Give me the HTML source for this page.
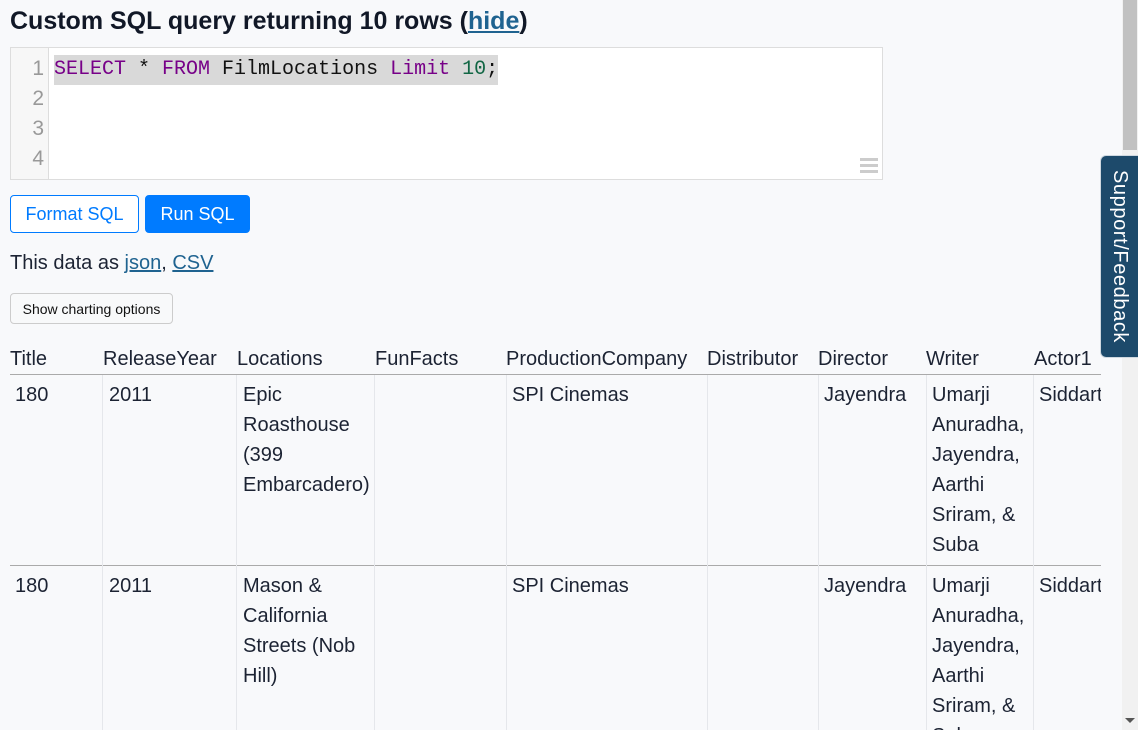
<!DOCTYPE html>
<html><head><meta charset="utf-8"><style>
*{box-sizing:border-box;margin:0;padding:0}
html,body{width:1138px;height:730px;overflow:hidden}
body{background:#f8f9fb;font-family:"Liberation Sans",Arial,sans-serif;color:#1c2333;position:relative}
.a{position:absolute}
h1{position:absolute;left:10px;top:7px;font-size:25px;font-weight:bold;color:#111827;white-space:nowrap}
a{color:#1f6390;text-decoration:underline}
.ed{left:10px;top:47px;width:873px;height:133px;background:#fff;border:1px solid #ddd;overflow:hidden}
.gut{left:0;top:0;width:38px;height:131px;background:#f7f7f7;border-right:1px solid #ddd}
.ln{position:absolute;right:4px;font:21px "Liberation Sans",sans-serif;color:#999;line-height:30px}
.code{left:43px;top:6px;height:30px;line-height:30px;font:20px/30px "Liberation Mono",monospace;background:#d9d9d9;white-space:pre;color:#111}
.k{color:#770088}.n{color:#116644}
.btn{top:195px;height:38px;border-radius:4px;font-size:18px;line-height:36px;text-align:center;border:1px solid #007bff}
.cell{position:absolute;font-size:20px;line-height:30px;padding-left:5px;white-space:nowrap}
.vl{position:absolute;width:1px;background:#e5e7eb}
</style></head><body>
<h1>Custom SQL query returning 10 rows (<a>hide</a>)</h1>
<div class="a ed">
 <div class="a gut">
  <div class="ln" style="top:6px">1</div><div class="ln" style="top:36px">2</div><div class="ln" style="top:66px">3</div><div class="ln" style="top:96px">4</div>
 </div>
 <div class="a code" style="top:7px"><span class="k">SELECT</span> * <span class="k">FROM</span> FilmLocations <span class="k">Limit</span> <span class="n">10</span>;</div>
 <div class="a" style="right:4px;bottom:6px;width:18px">
  <div style="height:3px;background:#ccc;margin-bottom:3px"></div><div style="height:3px;background:#ccc;margin-bottom:3px"></div><div style="height:3px;background:#ccc"></div>
 </div>
</div>
<div class="a btn" style="left:10px;width:129px;background:#fff;color:#007bff">Format SQL</div>
<div class="a btn" style="left:145px;width:105px;background:#007bff;color:#fff">Run SQL</div>
<div class="a" style="left:10px;top:250px;font-size:20px;line-height:26px">This data as <a>json</a>, <a>CSV</a></div>
<div class="a" style="left:10px;top:293px;width:163px;height:31px;border:1px solid #ccc;border-radius:4px;background:#f8f9fa;font-size:14px;line-height:30px;text-align:center;color:#111">Show charting options</div>

<div class="a" style="left:10px;top:340px;width:1091px;height:390px;overflow:hidden">
 <div class="a" style="left:0;top:34px;width:1100px;height:1px;background:#aaa"></div>
 <div class="a" style="left:0;top:225px;width:1100px;height:1px;background:#aaa"></div>
 <div class="vl" style="left:92px;top:35px;height:400px"></div>
 <div class="vl" style="left:226px;top:35px;height:400px"></div>
 <div class="vl" style="left:364px;top:35px;height:400px"></div>
 <div class="vl" style="left:496px;top:35px;height:400px"></div>
 <div class="vl" style="left:697px;top:35px;height:400px"></div>
 <div class="vl" style="left:808px;top:35px;height:400px"></div>
 <div class="vl" style="left:916px;top:35px;height:400px"></div>
 <div class="vl" style="left:1023px;top:35px;height:400px"></div>

 <div class="cell" style="left:-5px;top:4px">Title</div>
 <div class="cell" style="left:88px;top:4px">ReleaseYear</div>
 <div class="cell" style="left:222px;top:4px">Locations</div>
 <div class="cell" style="left:360px;top:4px">FunFacts</div>
 <div class="cell" style="left:491px;top:4px">ProductionCompany</div>
 <div class="cell" style="left:692px;top:4px">Distributor</div>
 <div class="cell" style="left:803px;top:4px">Director</div>
 <div class="cell" style="left:911px;top:4px">Writer</div>
 <div class="cell" style="left:1019px;top:4px">Actor1</div>

 <div class="cell" style="left:0;top:40px">180</div>
 <div class="cell" style="left:94px;top:40px">2011</div>
 <div class="cell" style="left:228px;top:40px">Epic<br>Roasthouse<br>(399<br>Embarcadero)</div>
 <div class="cell" style="left:497px;top:40px">SPI Cinemas</div>
 <div class="cell" style="left:809px;top:40px">Jayendra</div>
 <div class="cell" style="left:917px;top:40px">Umarji<br>Anuradha,<br>Jayendra,<br>Aarthi<br>Sriram, &amp;<br>Suba</div>
 <div class="cell" style="left:1024px;top:40px">Siddarth</div>

 <div class="cell" style="left:0;top:231px">180</div>
 <div class="cell" style="left:94px;top:231px">2011</div>
 <div class="cell" style="left:228px;top:231px">Mason &amp;<br>California<br>Streets (Nob<br>Hill)</div>
 <div class="cell" style="left:497px;top:231px">SPI Cinemas</div>
 <div class="cell" style="left:809px;top:231px">Jayendra</div>
 <div class="cell" style="left:917px;top:231px">Umarji<br>Anuradha,<br>Jayendra,<br>Aarthi<br>Sriram, &amp;<br>Suba</div>
 <div class="cell" style="left:1024px;top:231px">Siddarth</div>
</div>

<div class="a" style="left:1122px;top:0;width:16px;height:730px;background:#f1f1f1"></div>
<div class="a" style="left:1123px;top:0;width:14px;height:150px;background:#c1c1c1"></div>
<div class="a" style="left:1125px;top:718px;width:0;height:0;border-left:5px solid transparent;border-right:5px solid transparent;border-top:5px solid #555"></div>

<div class="a" style="left:1100px;top:155px;width:40px;height:203px;background:#1d4a6b;border:1px solid #cfd8e0;border-right:none;border-radius:6px 0 0 6px"></div>
<div class="a" style="left:1100px;top:155px;width:40px;height:203px;display:flex;align-items:center;justify-content:center">
 <div style="transform:rotate(90deg);color:#fff;font-size:20px;letter-spacing:0.6px;white-space:nowrap">Support/Feedback</div>
</div>
</body></html>
